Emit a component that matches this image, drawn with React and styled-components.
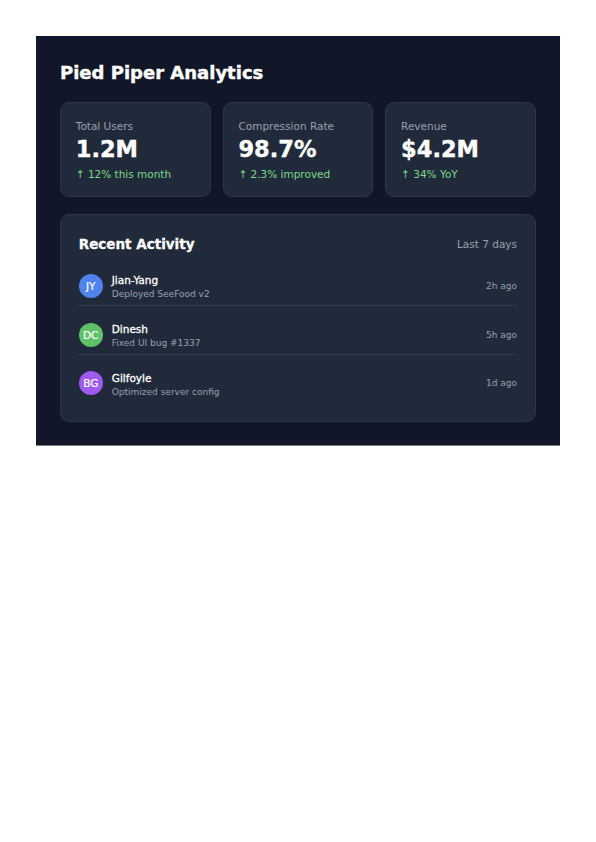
import styled, { createGlobalStyle } from "styled-components";

const stats = [
  { label: "Total Users", value: "1.2M", trend: "↑ 12% this month" },
  { label: "Compression Rate", value: "98.7%", trend: "↑ 2.3% improved" },
  { label: "Revenue", value: "$4.2M", trend: "↑ 34% YoY" },
];

const activity = [
  {
    initials: "JY",
    color: "#4f83ee",
    name: "Jian-Yang",
    action: "Deployed SeeFood v2",
    time: "2h ago",
  },
  {
    initials: "DC",
    color: "#5ec269",
    name: "Dinesh",
    action: "Fixed UI bug #1337",
    time: "5h ago",
  },
  {
    initials: "BG",
    color: "#9f5af0",
    name: "Gilfoyle",
    action: "Optimized server config",
    time: "1d ago",
  },
];

function App() {
  return (
    <>
      <GlobalStyle />
      <Dashboard>
        <Title>Pied Piper Analytics</Title>

        <StatGrid>
          {stats.map((stat) => (
            <StatCard key={stat.label}>
              <StatLabel>{stat.label}</StatLabel>
              <StatValue>{stat.value}</StatValue>
              <StatTrend>{stat.trend}</StatTrend>
            </StatCard>
          ))}
        </StatGrid>

        <ActivityCard>
          <ActivityHeader>
            <h2>Recent Activity</h2>
            <span>Last 7 days</span>
          </ActivityHeader>

          <ActivityList>
            {activity.map((item) => (
              <ActivityRow key={item.name}>
                <Avatar $color={item.color}>{item.initials}</Avatar>
                <Details>
                  <Name>{item.name}</Name>
                  <Action>{item.action}</Action>
                </Details>
                <Time>{item.time}</Time>
              </ActivityRow>
            ))}
          </ActivityList>
        </ActivityCard>
      </Dashboard>
    </>
  );
}

export default App;

const GlobalStyle = createGlobalStyle`
  * {
    box-sizing: border-box;
  }

  body {
    margin: 0;
    padding: 36px;
    background: #fff;
    font-family: "DejaVu Sans", sans-serif;
  }
`;

const Dashboard = styled.main`
  height: 410px;
  padding: 24px;
  background: #111728;
  border-bottom: 1px solid #777b86;
  color: #fff;
`;

const Title = styled.h1`
  margin: 0;
  padding-top: 1px;
  height: 42px;
  font-size: 18px;
  line-height: 24px;
  font-weight: bold;
  -webkit-text-stroke: 0.4px;
`;

const StatGrid = styled.section`
  display: grid;
  grid-template-columns: repeat(3, 1fr);
  gap: 12px;
  margin-bottom: 17px;
`;

const Card = styled.div`
  background: #212a3a;
  border: 1px solid #2d3646;
  border-radius: 9px;
`;

const StatCard = styled(Card)`
  height: 95px;
  padding: 16px 15px 0 14.75px;
`;

const StatLabel = styled.div`
  font-size: 10.5px;
  line-height: 15.75px;
  color: #98a1b0;
`;

const StatValue = styled.div`
  font-size: 22.5px;
  line-height: 27px;
  font-weight: bold;
  margin: 1px 0 4px;
  -webkit-text-stroke: 0.4px;
`;

const StatTrend = styled.div`
  font-size: 10.5px;
  line-height: 15.75px;
  color: #7adb87;
`;

const ActivityCard = styled(Card)`
  height: 208px;
  padding: 19px 18px 18px 17.75px;
`;

const ActivityHeader = styled.header`
  display: flex;
  align-items: flex-start;
  justify-content: space-between;
  margin-bottom: 17px;

  h2 {
    margin: 0;
    font-size: 13.5px;
    line-height: 21px;
    font-weight: bold;
    -webkit-text-stroke: 0.3px;
  }

  span {
    font-size: 10.5px;
    line-height: 20px;
    color: #98a1b0;
  }
`;

const ActivityList = styled.div`
  display: flex;
  flex-direction: column;
  gap: 15px;
`;

const ActivityRow = styled.div`
  display: flex;
  align-items: center;
  height: 33.75px;
  padding-bottom: 5px;
  border-bottom: 1px solid #313c4b;

  &:last-child {
    border-color: transparent;
  }
`;

const Avatar = styled.div`
  display: flex;
  align-items: center;
  justify-content: center;
  width: 24px;
  height: 24px;
  margin-right: 9px;
  border-radius: 50%;
  font-size: 10.5px;
  -webkit-text-stroke: 0.2px;
  background: ${({ $color }) => $color};
`;

const Details = styled.div`
  flex: 1;
  padding-top: 1.5px;
`;

const Name = styled.div`
  font-size: 10.5px;
  line-height: 15px;
  -webkit-text-stroke: 0.3px;
`;

const Action = styled.div`
  font-size: 9px;
  line-height: 12px;
  color: #98a1b0;
`;

const Time = styled.div`
  font-size: 9px;
  color: #98a1b0;
`;
